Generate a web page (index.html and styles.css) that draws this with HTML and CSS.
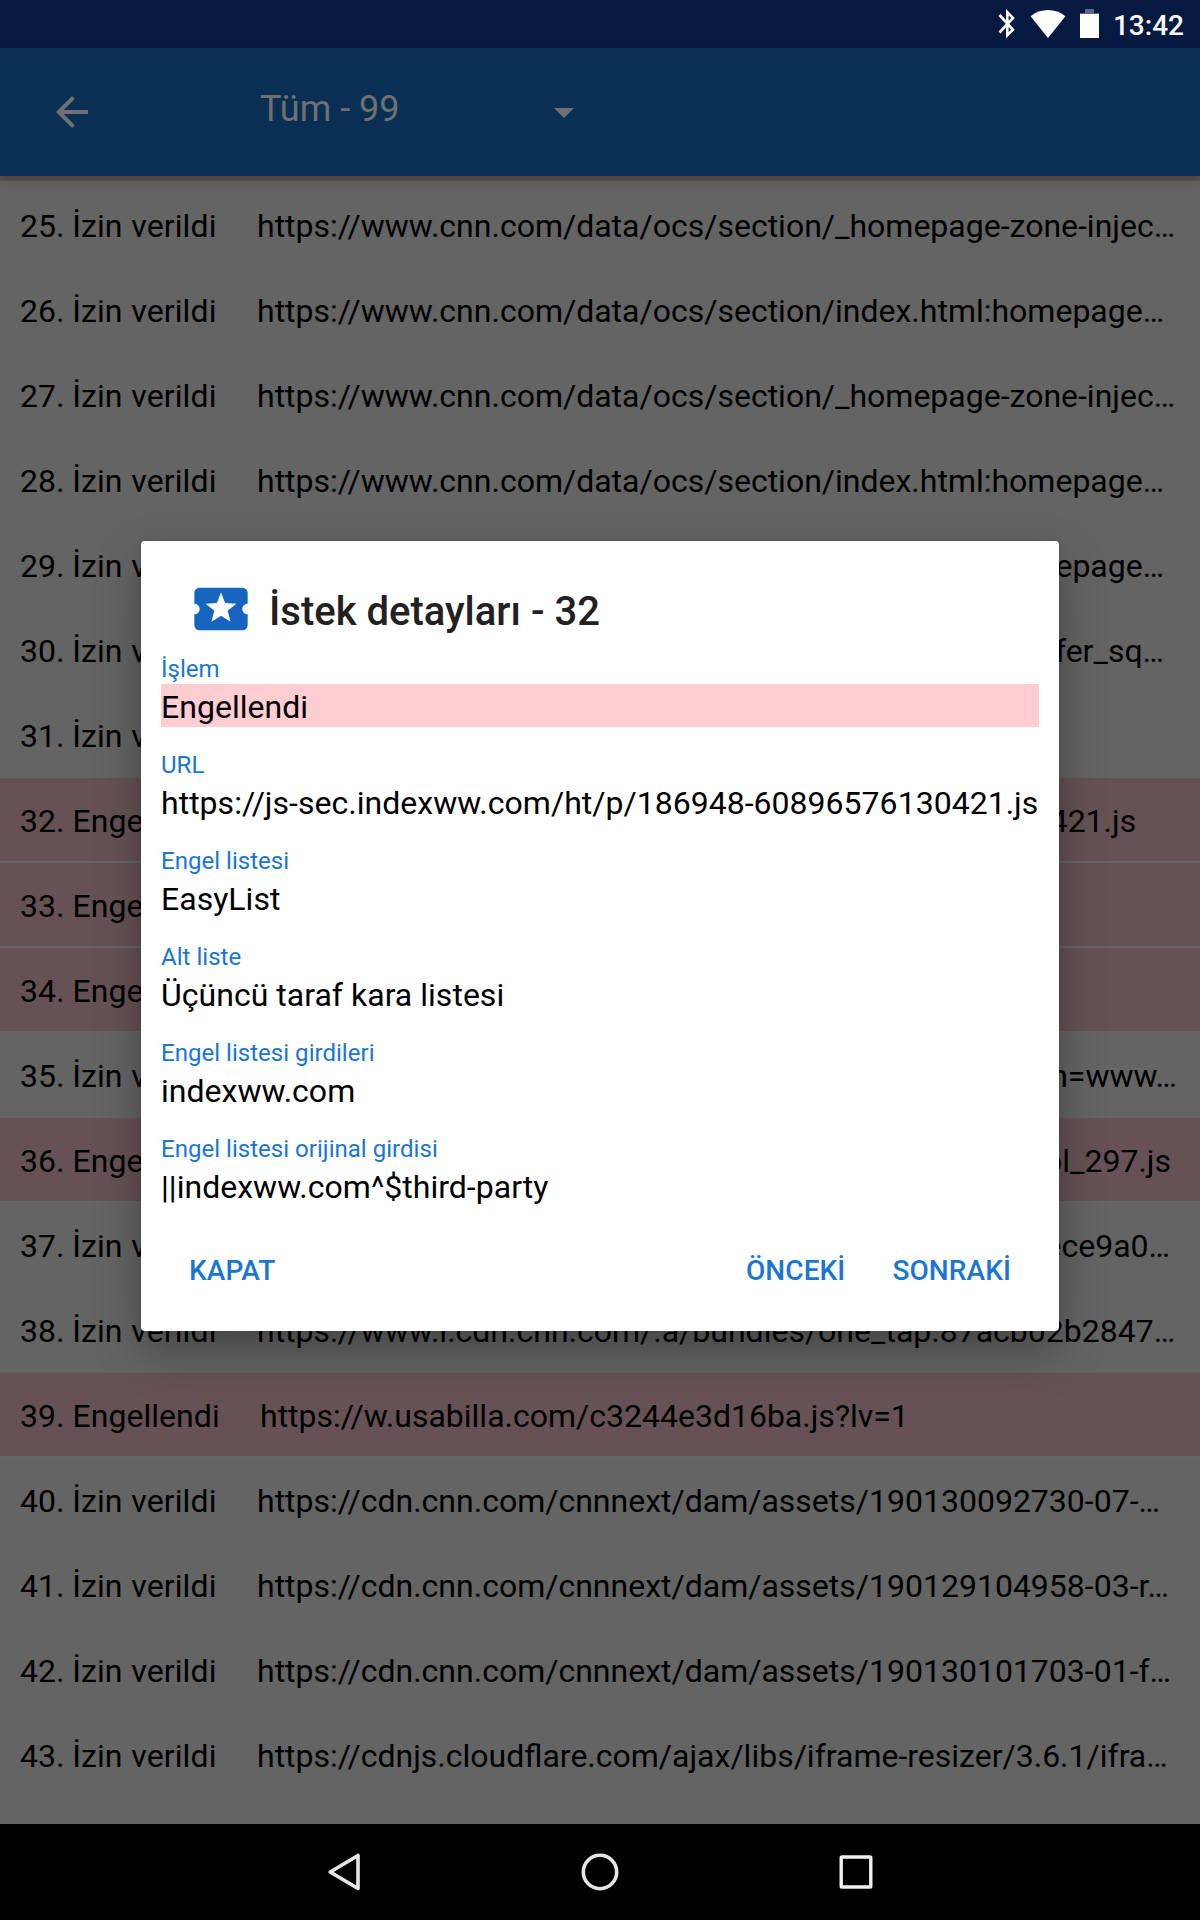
FILE: index.html
```
<!DOCTYPE html>
<html lang="tr">
<head>
<meta charset="utf-8">
<title>İstek detayları</title>
<link rel="stylesheet" href="styles.css">
</head>
<body>
<div class="screen">
  <header class="status">
    <svg class="bt" viewBox="0 0 18 30" width="18" height="30"><path d="M1.500 6 15 20.800 9.300 26.300V3.200L15 9 1.500 23.500" fill="none" stroke="#fff" stroke-width="2.600"/></svg>
    <svg class="wifi" viewBox="0 0 36 28" width="36" height="28"><path d="M18 28 .6 6.300C5.500 2.200 11.500 0 18 0s12.500 2.200 17.400 6.300z" fill="#fff"/></svg>
    <svg class="battery" viewBox="0 0 19 29" width="19" height="29"><path d="M5 0h9v4h5v2H0V4h5z" fill="#5a6a8b"/><path d="M0 5h19v24H0z" fill="#fff"/></svg>
    <span class="clock">13:42</span>
  </header>
  <div class="toolbar">
    <svg class="back" viewBox="0 0 24 24" width="48" height="48"><path d="M20 11H7.830l5.590-5.590L12 4l-8 8 8 8 1.410-1.410L7.830 13H20v-2z" fill="#707070"/></svg>
    <span class="filter">Tüm - 99</span>
    <svg class="caret" viewBox="0 0 20 10" width="20" height="10"><path d="M0 0h20L10 10z" fill="#707070"/></svg>
  </div>
  <main class="list">
    <div class="row blocked partial"></div>
    <div class="row"><span class="state">25. İzin <i>verildi</i></span><span>https://www.cnn.com/data/ocs/section/_homepage-zone-injec…</span></div>
    <div class="row"><span class="state">26. İzin <i>verildi</i></span><span>https://www.cnn.com/data/ocs/section/index.html:homepage…</span></div>
    <div class="row"><span class="state">27. İzin <i>verildi</i></span><span>https://www.cnn.com/data/ocs/section/_homepage-zone-injec…</span></div>
    <div class="row"><span class="state">28. İzin <i>verildi</i></span><span>https://www.cnn.com/data/ocs/section/index.html:homepage…</span></div>
    <div class="row"><span class="state">29. İzin <i>verildi</i></span><span>https://www.cnn.com/data/ocs/section/index.html:homepage…</span></div>
    <div class="row"><span class="state">30. İzin <i>verildi</i></span><span class="tail end-36">fer_sq…</span></div>
    <div class="row"><span class="state">31. İzin <i>verildi</i></span></div>
    <div class="row blocked"><span class="state">32. Engellendi</span><span>https://js-sec.indexww.com/ht/p/186948-60896576130421.js</span></div>
    <div class="row blocked"><span class="state">33. Engellendi</span></div>
    <div class="row blocked"><span class="state">34. Engellendi</span></div>
    <div class="row"><span class="state">35. İzin <i>verildi</i></span><span class="tail end-23">n=www…</span></div>
    <div class="row blocked"><span class="state">36. Engellendi</span><span class="tail end-29">ol_297.js</span></div>
    <div class="row"><span class="state">37. İzin <i>verildi</i></span><span class="tail end-30">ece9a0…</span></div>
    <div class="row"><span class="state">38. İzin <i>verildi</i></span><span>https://www.i.cdn.cnn.com/.a/bundles/one_tap.87acb02b2847…</span></div>
    <div class="row blocked"><span class="state">39. Engellendi</span><span>https://w.usabilla.com/c3244e3d16ba.js?lv=1</span></div>
    <div class="row"><span class="state">40. İzin <i>verildi</i></span><span>https://cdn.cnn.com/cnnnext/dam/assets/190130092730-07-…</span></div>
    <div class="row"><span class="state">41. İzin <i>verildi</i></span><span>https://cdn.cnn.com/cnnnext/dam/assets/190129104958-03-r…</span></div>
    <div class="row"><span class="state">42. İzin <i>verildi</i></span><span>https://cdn.cnn.com/cnnnext/dam/assets/190130101703-01-f…</span></div>
    <div class="row"><span class="state">43. İzin <i>verildi</i></span><span>https://cdnjs.cloudflare.com/ajax/libs/iframe-resizer/3.6.1/ifra…</span></div>
  </main>
  <nav class="navbar">
    <svg viewBox="0 0 48 48" width="48" height="48"><path d="M38 7.500v33L10.200 24z" fill="none" stroke="#e6e6e6" stroke-width="3.600" stroke-linejoin="round"/></svg>
    <svg viewBox="0 0 48 48" width="48" height="48"><circle cx="24" cy="24" r="16.700" fill="none" stroke="#e6e6e6" stroke-width="3.600"/></svg>
    <svg viewBox="0 0 48 48" width="48" height="48"><rect x="9.200" y="9" width="29.600" height="30" rx=".8" fill="none" stroke="#f0f0f0" stroke-width="3.400"/></svg>
  </nav>
  <section class="dialog">
    <div class="heading">
      <svg viewBox="0 0 24 24" width="64" height="64"><path d="M20 12c0-1.100.9-2 2-2V6c0-1.100-.9-2-2-2H4c-1.100 0-1.990.9-1.990 2v4c1.100 0 1.990.9 1.990 2s-.89 2-2 2v4c0 1.100.9 2 2 2h16c1.100 0 2-.9 2-2v-4c-1.100 0-2-.9-2-2zm-4.420 4.800L12 14.500l-3.580 2.300 1.080-4.120-3.290-2.690 4.240-.25L12 5.800l1.540 3.950 4.240.25-3.290 2.690 1.090 4.110z" fill="#1565c0"/></svg>
      <h1>İstek detayları - 32</h1>
    </div>
    <dl class="fields">
      <div><dt>İşlem</dt><dd class="hit">Engellendi</dd></div>
      <div><dt>URL</dt><dd>https://js-sec.indexww.com/ht/p/186948-60896576130421.js</dd></div>
      <div><dt>Engel listesi</dt><dd>EasyList</dd></div>
      <div><dt>Alt liste</dt><dd>Üçüncü taraf kara listesi</dd></div>
      <div><dt>Engel listesi girdileri</dt><dd>indexww.com</dd></div>
      <div><dt>Engel listesi orijinal girdisi</dt><dd>||indexww.com^$third-party</dd></div>
    </dl>
    <div class="actions"><button>KAPAT</button><button class="prev">ÖNCEKİ</button><button>SONRAKİ</button></div>
  </section>
</div>
</body>
</html>
```
FILE: styles.css
```
* { box-sizing: border-box; }
body { margin: 0; font-family: Roboto, "Noto Sans", sans-serif; color: #000; }
.screen { position: relative; width: 1200px; height: 1920px; overflow: hidden; display: flex; flex-direction: column; background: #646464; }

.status { height: 48px; flex: none; background: #061a41; color: #fff; display: flex; align-items: flex-start; justify-content: flex-end; padding: 9px 16px 0 0; }
.status .wifi { margin: 1px 0 0 14px; }
.status .battery { margin-left: 14px; }
.clock { margin-left: 14px; font-size: 28px; font-weight: 500; line-height: 33px; }

.toolbar { height: 128px; flex: none; background: #0a2f54; display: flex; align-items: center; padding-left: 48px; color: #707070; box-shadow: 0 3px 10px rgba(0,0,0,.3); z-index: 1; }
.filter { width: 294px; margin: 0 0 6px 164px; font-size: 36px; line-height: 42px; }
.caret { margin-top: 2px; }

.list { flex: 1; overflow: hidden; }
.row { height: 85px; border-bottom: 2px solid #646464; padding: 2px 0 0 20px; display: flex; align-items: center; font-size: 32px; white-space: nowrap; }
.row.blocked { background: #665254; border-bottom-color: #646667; }
.row.partial { height: 7px; padding: 0; }
.state { width: 237px; flex: none; }
.state i { font-style: normal; margin-left: 1px; letter-spacing: .1px; }
.blocked .state { width: 240px; letter-spacing: .04px; }
.tail { flex: 1; text-align: right; }
.end-36 { padding-right: 36px; }
.end-23 { padding-right: 23px; }
.end-29 { padding-right: 29px; }
.end-30 { padding-right: 30px; }

.navbar { height: 96px; flex: none; background: #000; display: flex; align-items: center; justify-content: center; gap: 208px; z-index: 1; }

.dialog { position: absolute; left: 141px; top: 541px; width: 918px; height: 790px; background: #fff; border-radius: 4px; box-shadow: 0 20px 48px rgba(0,0,0,.3), 0 0 8px rgba(0,0,0,.1); padding: 36px 20px 0; }
.heading { height: 75px; padding-left: 28px; display: flex; align-items: flex-start; gap: 16px; }
h1 { margin: 11px 0 0; font-size: 40px; line-height: 48px; font-weight: 500; color: #212121; }
.fields { margin: 0; display: grid; gap: 21px; }
dt { height: 32px; font-size: 24px; line-height: 34px; color: #1976d2; letter-spacing: .03px; }
dd { margin: 0; height: 43px; font-size: 32px; line-height: 47px; white-space: nowrap; letter-spacing: .02px; }
.hit { background: #ffcdd2; }
.actions { display: flex; padding: 46px 28px 0 28px; }
button { border: 0; padding: 0; background: none; font: 500 28px/36px Roboto, sans-serif; color: #1976d2; letter-spacing: .1px; }
.prev { margin: 0 47px 0 auto; }
```
